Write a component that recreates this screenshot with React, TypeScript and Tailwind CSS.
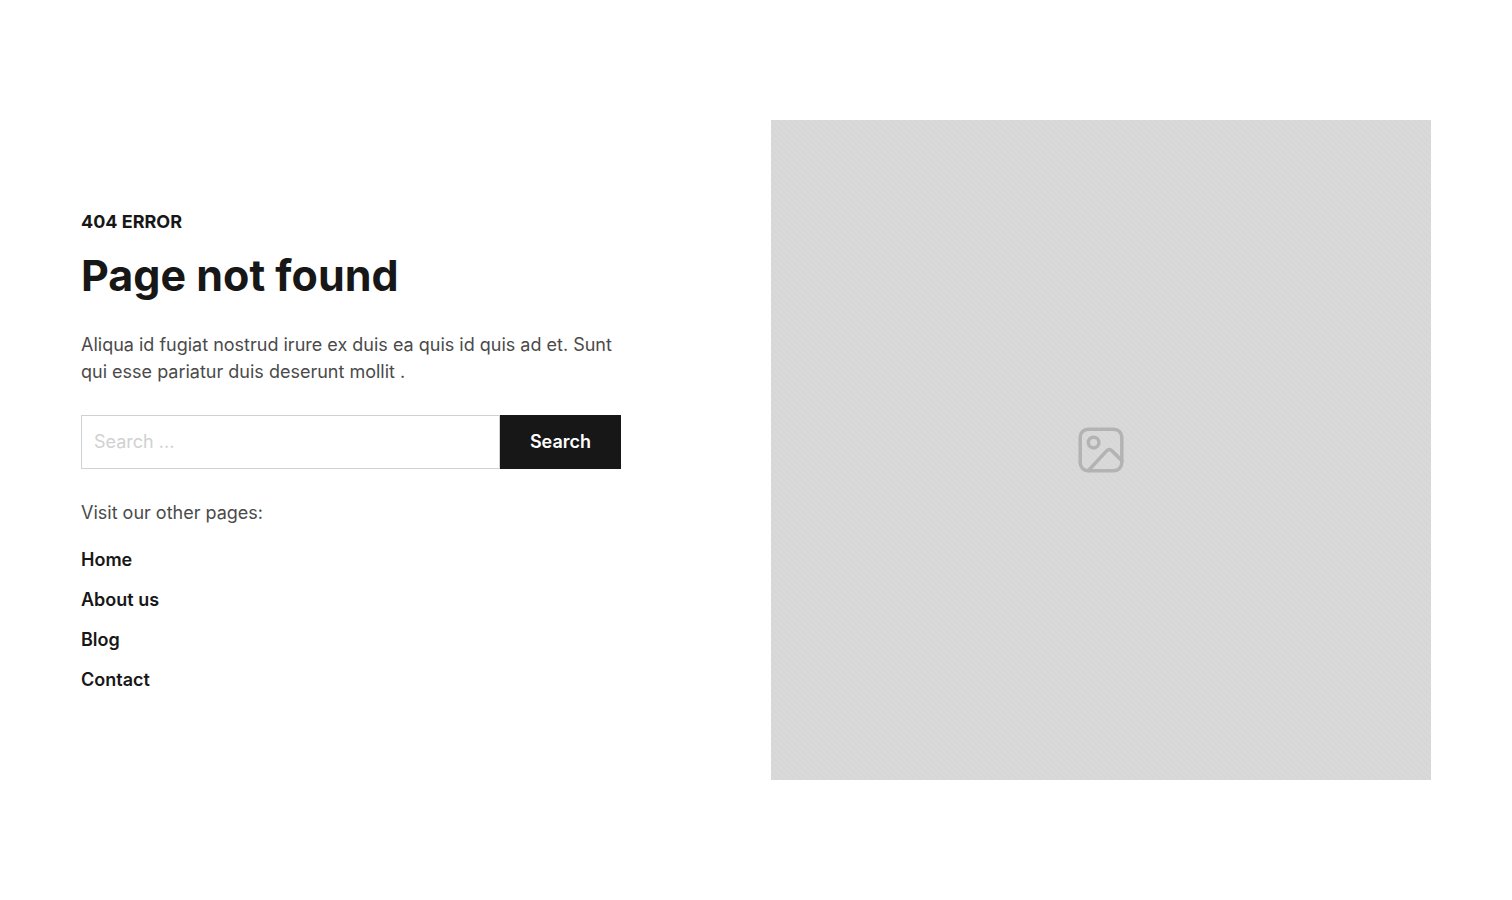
const pages = [
  { label: 'Home', href: '#home' },
  { label: 'About us', href: '#about' },
  { label: 'Blog', href: '#blog' },
  { label: 'Contact', href: '#contact' },
];

function ImagePlaceholder() {
  return (
    <div className="flex aspect-square items-center justify-center bg-[#d9d9d9] bg-[linear-gradient(45deg,#d6d6d6_12.5%,#d9d9d9_12.5%,#d9d9d9_50%,#d6d6d6_50%,#d6d6d6_62.5%,#d9d9d9_62.5%)] bg-[length:6px_6px]">
      <svg
        className="size-12 text-[#b3b3b3]"
        viewBox="0 0 48 48"
        fill="none"
        stroke="currentColor"
        strokeWidth="3.5"
        strokeLinecap="round"
        strokeLinejoin="round"
        aria-hidden="true"
      >
        <rect x="3.2" y="3.2" width="41.6" height="41.6" rx="8" />
        <circle cx="16.6" cy="16.6" r="5.3" />
        <path d="M11.5 44.5 L29.6 24.9 Q32.2 22.2 34.9 24.7 L44.8 34.6" />
      </svg>
    </div>
  );
}

function SearchForm() {
  return (
    <form className="mt-[30px] flex h-[54px]" onSubmit={(e) => e.preventDefault()}>
      <input
        type="search"
        aria-label="Search"
        placeholder="Search ..."
        className="min-w-0 flex-1 border border-[#d1d1d1] px-3 outline-none placeholder:text-[#d1d1d1]"
      />
      <button type="submit" className="bg-[#171717] px-[30px] font-semibold text-white">
        Search
      </button>
    </form>
  );
}

export default function App() {
  return (
    <main className="flex min-h-screen items-center bg-white px-10 font-['Inter',sans-serif] text-lg/[27px] text-[#171717]">
      <div className="mx-auto grid w-full max-w-[1350px] items-center gap-[30px] md:grid-cols-2">
        <section className="max-w-[540px]">
          <p className="font-bold">404 ERROR</p>
          <h1 className="mt-3 text-[43px]/[56px] font-bold">Page not found</h1>
          <p className="mt-7 text-[#4a4a4a]">
            Aliqua id fugiat nostrud irure ex duis ea quis id quis ad et. Sunt qui esse pariatur
            duis deserunt mollit .
          </p>

          <SearchForm />

          <p className="mt-[30px] text-[#4a4a4a]">Visit our other pages:</p>
          <ul className="mt-5 space-y-[13px] font-semibold">
            {pages.map((page) => (
              <li key={page.label}>
                <a href={page.href}>{page.label}</a>
              </li>
            ))}
          </ul>
        </section>

        <ImagePlaceholder />
      </div>
    </main>
  );
}
